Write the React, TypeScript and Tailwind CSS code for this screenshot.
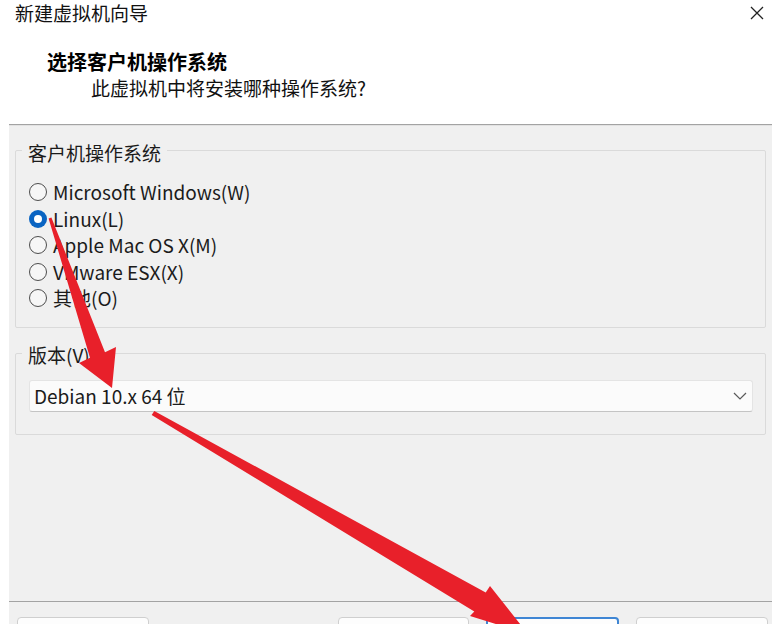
import React from "react";

const FONT = '"Noto Sans CJK SC", "Noto Sans", sans-serif';

function Radio({ checked, label }: { checked?: boolean; label: string }) {
  return (
    <div className="flex items-center h-[26.5px] gap-[6px]">
      {checked ? (
        <div className="w-[18px] h-[18px] rounded-full bg-[#0a64c2] flex items-center justify-center shrink-0">
          <div className="w-[8px] h-[8px] rounded-full bg-white" />
        </div>
      ) : (
        <div className="w-[18px] h-[18px] rounded-full border border-[#4d4d4d] bg-[#f6f6f6] shrink-0" />
      )}
      <span className="text-[19px] leading-[26px] text-[#1b1b1b]">{label}</span>
    </div>
  );
}

export default function App() {
  return (
    <div
      className="w-[772px] h-[624px] bg-white relative overflow-hidden flex flex-col"
      style={{ fontFamily: FONT }}
    >
      {/* Header */}
      <div className="h-[124px] shrink-0 flex flex-col">
        <div className="h-[26px] flex items-center justify-between pl-[15px] pr-[8px]">
          <span className="text-[19px] leading-[26px] text-[#111]">新建虚拟机向导</span>
          <svg width="14" height="14" viewBox="0 0 14 14">
            <path d="M1 1 L13 13 M13 1 L1 13" stroke="#222" strokeWidth="1.3" fill="none" />
          </svg>
        </div>
        <div className="mt-[23px] pl-[47px] text-[20px] font-bold leading-[26px] text-black">
          选择客户机操作系统
        </div>
        <div className="pl-[91px] text-[19px] leading-[26px] text-[#111]">
          此虚拟机中将安装哪种操作系统?
        </div>
      </div>

      {/* Gray panel */}
      <div className="ml-[9px] flex-1 min-h-0 bg-[#f0f0f0] border-t border-[#a3a3a3] flex flex-col">
        <div className="h-[1px] bg-[#e2e2e2] shrink-0" />
        <div className="px-[6px] flex flex-col shrink-0">
          {/* Group 1 */}
          <div className="mt-[24px] h-[178px] border border-[#dadada] rounded-[2px] flex flex-col">
            <div className="-mt-[11px] ml-[6px] px-[6px] w-fit bg-[#f0f0f0] text-[19px] leading-[26px] text-[#1b1b1b]">
              客户机操作系统
            </div>
            <div className="mt-[13px] pl-[13px] flex flex-col">
              <Radio label="Microsoft Windows(W)" />
              <Radio checked label="Linux(L)" />
              <Radio label="Apple Mac OS X(M)" />
              <Radio label="VMware ESX(X)" />
              <Radio label="其他(O)" />
            </div>
          </div>

          {/* Group 2 */}
          <div className="mt-[25px] h-[82px] border border-[#dadada] rounded-[2px] flex flex-col">
            <div className="-mt-[12px] ml-[6px] px-[6px] w-fit bg-[#f0f0f0] text-[19px] leading-[26px] text-[#1b1b1b]">
              版本(V)
            </div>
            <div className="mt-[12px] ml-[13px] mr-[12px] h-[32px] bg-[#fbfbfb] border border-[#e4e4e4] border-b-[#c4c4c4] rounded-[3px] flex items-center justify-between pl-[4px] pr-[5px]">
              <span className="text-[19px] leading-[26px] text-[#1b1b1b]">Debian 10.x 64 位</span>
              <svg width="14" height="8" viewBox="0 0 14 8">
                <path d="M1 1 L7 7 L13 1" stroke="#5a5a5a" strokeWidth="1.2" fill="none" />
              </svg>
            </div>
          </div>
        </div>

        <div className="flex-1" />

        {/* Bottom buttons */}
        <div className="h-[23px] shrink-0 border-t border-[#a3a3a3] pt-[15px] pl-[8px] pr-[4px]">
          <div className="flex h-[32px]">
            <div className="w-[132px] h-[32px] rounded-[4px] border border-[#cfcfcf] bg-[#fdfdfd]" />
            <div className="flex-1" />
            <div className="w-[131px] h-[32px] rounded-[4px] border border-[#cfcfcf] bg-[#fdfdfd]" />
            <div className="ml-[17px] w-[133px] h-[32px] rounded-[4px] border-2 border-[#3f86d4] bg-[#fdfdfd]" />
            <div className="ml-[17px] w-[132px] h-[32px] rounded-[4px] border border-[#cfcfcf] bg-[#fdfdfd]" />
          </div>
        </div>
      </div>

      {/* Red annotation arrows */}
      <svg
        className="absolute left-0 top-0 pointer-events-none"
        width="772"
        height="624"
        viewBox="0 0 772 624"
      >
        <polygon
          points="51.4,217.5 105,352.2 116,347 112,388 79,363 90,357.8 48.6,218.5"
          fill="#e8202a"
        />
        <polygon
          points="154.3,410.9 485.7,592.6 490,586 528,634 470,616 474.3,611.4 151.7,415.1"
          fill="#e8202a"
        />
      </svg>
    </div>
  );
}
